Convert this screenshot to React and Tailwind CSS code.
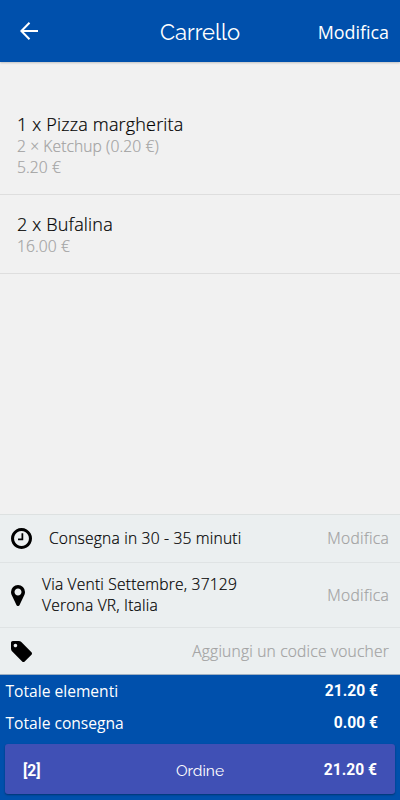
const CLOCK =
  "M1024 544v448q0 14-9 23t-23 9h-320q-14 0-23-9t-9-23v-64q0-14 9-23t23-9h224v-352q0-14 9-23t23-9h64q14 0 23 9t9 23zm416 352q0-148-73-273t-198-198-273-73-273 73-198 198-73 273 73 273 198 198 273 73 273-73 198-198 73-273zm224 0q0 209-103 385.5t-279.5 279.5-385.5 103-385.5-103-279.5-279.5-103-385.5 103-385.5 279.5-279.5 385.5-103 385.5 103 279.5 279.5 103 385.5z";
const PIN =
  "M768 640q0-106-75-181t-181-75-181 75-75 181 75 181 181 75 181-75 75-181zm256 0q0 109-33 179l-364 774q-16 33-47.5 52t-67.5 19-67.5-19-46.5-52l-365-774q-33-70-33-179 0-212 150-362t362-150 362 150 150 362z";
const TAG =
  "M576 448q0-53-37.5-90.5t-90.5-37.5-90.5 37.5-37.5 90.5 37.5 90.5 90.5 37.5 90.5-37.5 37.5-90.5zm1067 576q0 53-37 90l-491 492q-39 37-91 37-53 0-90-37l-715-716q-38-37-64.5-101t-26.5-117v-416q0-52 38-90t90-38h416q53 0 117 26.5t102 64.5l715 714q37 39 37 91z";

function Header() {
  return (
    <header className="grid h-[62px] shrink-0 grid-cols-[1fr_auto_1fr] items-center bg-[#0050ac] px-[11px] text-white shadow-[0_1px_2px_rgba(0,0,0,0.2)]">
      <svg className="ml-[9px] h-[18px] w-[18px]" viewBox="0 0 18 18" fill="none" stroke="currentColor" strokeWidth="2">
        <path d="M18 9H1.5M9.5.8 1.4 9l8.1 8.2" />
      </svg>
      <h1 className="pt-[3px] font-['Raleway','Lato',sans-serif] text-[22px] font-normal">Carrello</h1>
      <button className="justify-self-end pt-0.5 text-[17.9px] font-normal">Modifica</button>
    </header>
  );
}

function CartItem({ title, lines }) {
  return (
    <li className="border-b border-[#dedede] px-[17px] pt-[19px] pb-4 [-webkit-text-stroke:0.2px]">
      <p className="mb-px text-[18px] leading-[21px] tracking-[0.18px] text-black">{title}</p>
      {lines.map((line) => (
        <p key={line} className="text-[15.6px] leading-[21px] tracking-[0.1px] text-[#a2a2a2]">{line}</p>
      ))}
    </li>
  );
}

function Total({ label, value }) {
  return (
    <div className="flex h-8 items-center justify-between pr-[22px] pl-[5.5px]">
      <span className="text-[15.6px] font-normal">{label}</span>
      <span className="font-['Roboto',sans-serif] text-[15.6px] font-bold">{value}</span>
    </div>
  );
}

export default function App() {
  return (
    <div className="flex h-[800px] w-[400px] flex-col overflow-hidden bg-[#f1f1f1] font-['Open_Sans',sans-serif] font-light">
      <Header />
      <ul className="flex-1 pt-[33px]">
        <CartItem title="1 x Pizza margherita" lines={["2 × Ketchup (0.20 €)", "5.20 €"]} />
        <CartItem title="2 x Bufalina" lines={["16.00 €"]} />
      </ul>
      <section className="bg-[#ebeff0] text-[15.6px] tracking-[0.19px] text-black [-webkit-text-stroke:0.2px]">
        <div className="flex h-12 items-center border-t border-[#dde1e1] px-[11px]">
          <svg className="h-[21px] w-[21px]" viewBox="128 128 1536 1536"><path d={CLOCK} /></svg>
          <span className="ml-[17px] flex-1 pt-px">Consegna in 30 - 35 minuti</span>
          <span className="pt-px tracking-[0.3px] text-[#a2a2a2]">Modifica</span>
        </div>
        <div className="flex h-[65px] items-center border-t border-[#dfe3e4] px-[11px]">
          <svg className="h-[21px] w-[14px]" viewBox="0 128 1024 1536"><path d={PIN} /></svg>
          <span className="ml-[17px] flex-1 leading-[21px]">Via Venti Settembre, 37129<br />Verona VR, Italia</span>
          <span className="pt-px tracking-[0.3px] text-[#a2a2a2]">Modifica</span>
        </div>
        <div className="flex h-[47px] items-center border-t border-[#dfe3e4] px-[11px]">
          <svg className="h-[21px] w-[21px]" viewBox="128 128 1516 1516"><path d={TAG} /></svg>
          <span className="flex-1 pt-0.5 text-right text-[#a2a2a2]">Aggiungi un codice voucher</span>
        </div>
      </section>
      <footer className="h-[126px] shrink-0 border-t border-[#9eafc2] bg-[#0050ac] pt-px text-white">
        <Total label="Totale elementi" value="21.20 €" />
        <Total label="Totale consegna" value="0.00 €" />
        <button className="mx-[5px] mt-1 grid h-[50px] w-[390px] grid-cols-[1fr_auto_1fr] items-center rounded-[3px] bg-[#4050b5] px-[18px] pt-[3px] shadow-[0_1px_2px_rgba(0,0,0,0.35)]">
          <span className="text-left font-['Roboto',sans-serif] text-[15.7px] font-bold">[2]</span>
          <span className="font-['Raleway','Lato',sans-serif] text-[15.5px] font-normal">Ordine</span>
          <span className="text-right font-['Roboto',sans-serif] text-[15.6px] font-bold">21.20 €</span>
        </button>
      </footer>
    </div>
  );
}
